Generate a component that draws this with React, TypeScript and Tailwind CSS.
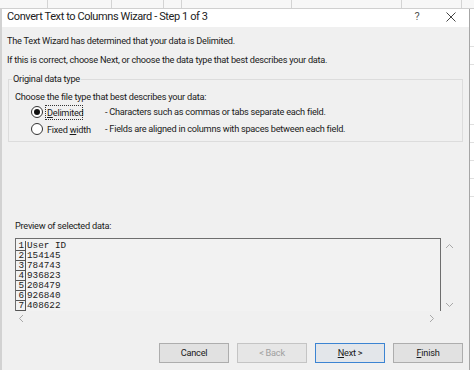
const ui = "font-['Roboto','Segoe_UI',sans-serif]";

function Radio({ checked }: { checked: boolean }) {
  return (
    <span className="w-[12px] h-[12px] rounded-full border border-[#333] bg-white flex items-center justify-center shrink-0">
      {checked && <span className="w-[6px] h-[6px] rounded-full bg-[#111]" />}
    </span>
  );
}

function Chevron({ dir }: { dir: "up" | "down" | "left" | "right" }) {
  const pts: Record<string, string> = {
    up: "1,6 4.5,2.5 8,6",
    down: "1,3 4.5,6.5 8,3",
    left: "6,1 2.5,4.5 6,8",
    right: "3,1 6.5,4.5 3,8",
  };
  return (
    <svg width="9" height="9" viewBox="0 0 9 9" className="shrink-0">
      <polyline points={pts[dir]} fill="none" stroke="#a8a8a8" strokeWidth="1" />
    </svg>
  );
}

const rows = ["User ID", "154145", "784743", "936823", "208479", "926840", "408622"];

export default function App() {
  return (
    <div className={`w-[474px] h-[370px] overflow-hidden bg-white flex flex-col ${ui} text-[#1a1a1a] whitespace-nowrap`}>
      {/* spreadsheet strip behind */}
      <div className="h-[9px] shrink-0 flex bg-[#f7f7f7] border-b border-[#d0d0d0]">
        <div className="w-[48px] border-r border-[#d4d4d4]" />
        <div className="w-[64px] border-r border-[#d4d4d4]" />
        <div className="w-[52px] border-r border-[#d4d4d4]" />
        <div className="w-[18px] border-r border-[#d4d4d4]" />
        <div className="w-[110px] border-r border-[#d4d4d4]" />
        <div className="w-[110px] border-r border-[#d4d4d4]" />
        <div className="w-[60px] border-r border-[#d4d4d4]" />
        <div className="flex-1" />
      </div>
      <div className="flex flex-1">
        <div className="w-[2px] bg-[#d2d2d2]" />
        {/* dialog */}
        <div className="w-[468px] bg-[#f0f0f0] border-r border-[#a6a6a6] flex flex-col">
          <div className="h-[18px] bg-white flex items-start pt-[1px] pl-[5px] text-[11px] tracking-[-0.4px] leading-[14px] text-[#222]">
            <span>Convert Text to Columns Wizard - Step 1 of 3</span>
            <span className="ml-auto w-[10px] text-center mr-[24px] text-[#555]">?</span>
            <svg width="10" height="10" viewBox="0 0 10 10" className="mt-[2px] mr-[13px]">
              <path d="M0.5 0.5 L9.5 9.5 M9.5 0.5 L0.5 9.5" stroke="#444" strokeWidth="1" />
            </svg>
          </div>
          <div className="px-[5px] text-[9.2px] tracking-[-0.25px] flex flex-col">
            <div className="mt-[8px] h-[12px] leading-[12px]">The Text Wizard has determined that your data is Delimited.</div>
            <div className="mt-[7px] h-[12px] leading-[12px]">If this is correct, choose Next, or choose the data type that best describes your data.</div>
            <div className="relative mt-[13px] ml-[1px] w-[455px] h-[63px] border border-[#dcdcdc] pl-[6px] pt-[11px]">
              <span className="absolute -top-[7px] left-[3px] bg-[#f0f0f0] px-[1px] leading-[12px]">Original data type</span>
              <div className="h-[12px] leading-[12px]">Choose the file type that best describes your data:</div>
              <div className="mt-[1px] h-[16px] flex items-center">
                <span className="ml-[16px]"><Radio checked /></span>
                <span className="w-[60px] ml-[2px] flex">
                  <span className="w-[38px] border border-dotted border-[#333] px-[1px] leading-[13px]"><span className="underline">D</span>elimited</span>
                </span>
                <span>- Characters such as commas or tabs separate each field.</span>
              </div>
              <div className="mt-[1px] h-[16px] flex items-center">
                <span className="ml-[16px]"><Radio checked={false} /></span>
                <span className="w-[60px] ml-[2px] flex">
                  <span className="border border-dotted border-transparent px-[1px] leading-[13px]">Fixed <span className="underline">w</span>idth</span>
                </span>
                <span>- Fields are aligned in columns with spaces between each field.</span>
              </div>
            </div>
            <div className="mt-[78px] ml-[8px] h-[12px] leading-[12px]">Preview of selected data:</div>
            <div className="mt-[6px] ml-[8px] flex flex-col">
              <div className="flex">
                <div className="w-[426px] h-[73px] border-t border-x border-[#6e6e6e] bg-[#f2f2f2] pt-[2px] overflow-hidden font-['Liberation_Mono','Courier_New',monospace] text-[9.3px] tracking-normal text-[#222]">
                  {rows.map((r, i) => (
                    <div key={i} className="flex h-[10px] leading-[10px]">
                      <span className="w-[10px] border-r border-b border-[#555] text-right pr-[1px]">{i + 1}</span>
                      <span className="pl-[1px]">{r}</span>
                    </div>
                  ))}
                </div>
                <div className="w-[16px] h-[73px] flex flex-col items-center justify-between pt-[4px] pb-[2px]">
                  <Chevron dir="up" />
                  <Chevron dir="down" />
                </div>
              </div>
              <div className="w-[426px] h-[15px] flex items-center justify-between pl-[2px] pr-[5px]">
                <Chevron dir="left" />
                <Chevron dir="right" />
              </div>
            </div>
            <div className="mt-[17px] mr-[1px] flex justify-end gap-[8px]">
              <div className="w-[70px] h-[20px] bg-[#e1e1e1] border border-[#adadad] flex items-center justify-center">Cancel</div>
              <div className="w-[70px] h-[20px] bg-[#e6e6e6] border border-[#c4c4c4] flex items-center justify-center text-[#a0a0a0]">&lt; Back</div>
              <div className="w-[70px] h-[20px] bg-[#e3e6ea] border border-[#3c84d2] flex items-center justify-center"><span><span className="underline">N</span>ext &gt;</span></div>
              <div className="w-[70px] h-[20px] bg-[#e1e1e1] border border-[#adadad] flex items-center justify-center"><span><span className="underline">F</span>inish</span></div>
            </div>
          </div>
        </div>
        <div className="flex-1 bg-white flex flex-col">
          <div className="h-[38px] border-b border-[#e0e0e0]" />
          <div className="h-[18px] border-b border-[#e0e0e0]" />
          <div className="h-[60px] border-b border-[#e0e0e0]" />
          <div className="h-[18px] border-b border-[#e0e0e0]" />
          <div className="h-[18px] border-b border-[#e0e0e0]" />
          <div className="h-[18px] border-b border-[#e0e0e0]" />
          <div className="h-[18px] border-b border-[#e0e0e0]" />
        </div>
      </div>
    </div>
  );
}
